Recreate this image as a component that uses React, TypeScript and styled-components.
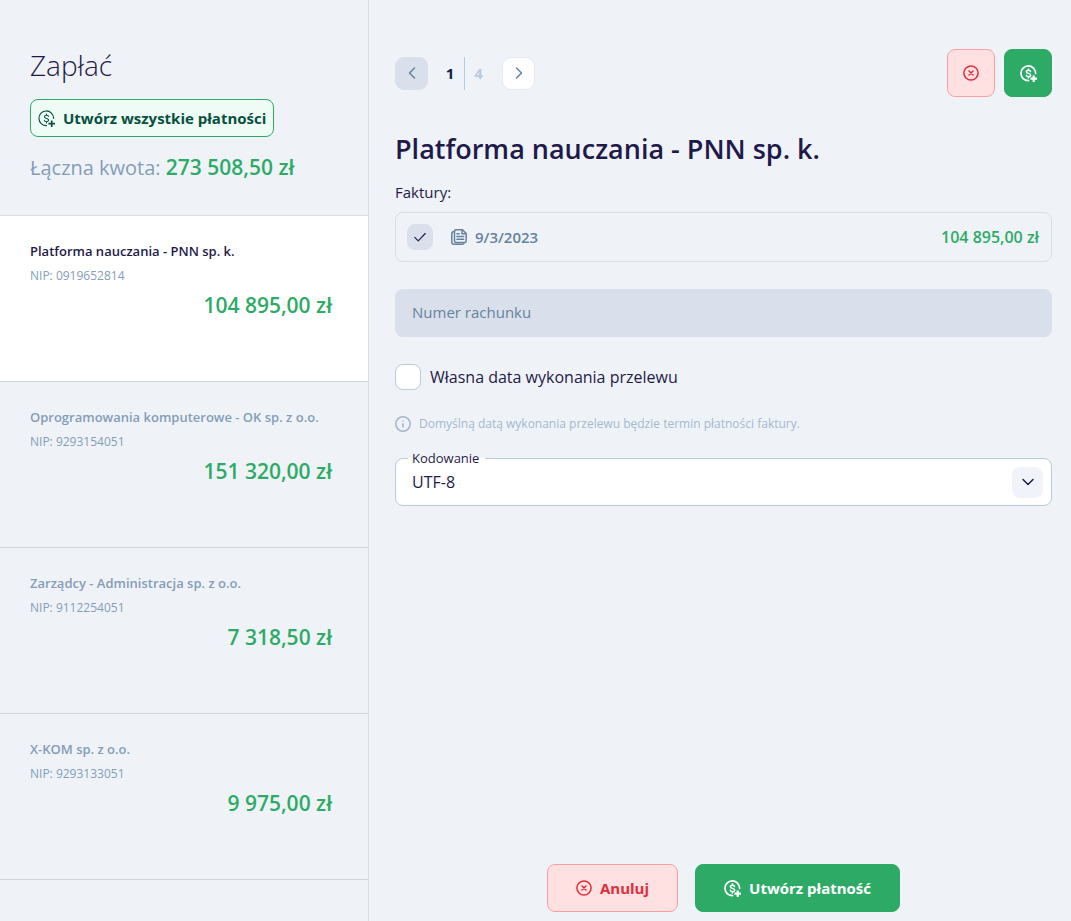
import React, { useState } from 'react';
import styled, { createGlobalStyle, css } from 'styled-components';

const color = {
  page: '#eff3f8',
  line: '#d9dfe6',
  field: '#d9e0eb',
  outline: '#b8cadd',
  ink: '#1f1a4a',
  slate: '#66829f',
  muted: '#849db7',
  faint: '#a3b8ce',
  green: '#2dab66',
  greenInk: '#07503f',
  red: '#e02d3c',
};

const GlobalStyle = createGlobalStyle`
  *, *::before, *::after { box-sizing: border-box; }
  body {
    margin: 0;
    background: ${color.page};
    color: ${color.ink};
    font-family: "Open Sans", "Noto Sans", sans-serif;
    font-size: 15px;
    line-height: 20px;
  }
  button, input, select { font: inherit; color: inherit; margin: 0; }
  button { cursor: pointer; padding: 0; }
  h1, h2, p, ul { margin: 0; padding: 0; }
`;

const Page = styled.div`
  display: flex;
  min-height: 100vh;
`;

const Sidebar = styled.aside`
  flex: none;
  width: 369px;
  border-right: 1px solid ${color.line};
`;

const Summary = styled.header`
  display: flex;
  flex-direction: column;
  align-items: flex-start;
  height: 216px;
  padding: 47px 30px 0;
  border-bottom: 1px solid ${color.line};
`;

const Title = styled.h1`
  font-size: 28px;
  line-height: 36px;
  font-weight: 300;
`;

const Total = styled.p`
  margin-top: 16px;
  font-size: 20px;
  line-height: 28px;
  color: ${color.muted};
  strong { font-size: 21px; font-weight: 600; color: ${color.green}; }
`;

const PayeeList = styled.ul`
  list-style: none;
`;

const Payee = styled.button<{ $active: boolean }>`
  display: flex;
  flex-direction: column;
  width: 100%;
  height: 166px;
  padding: 25px 36px 0 30px;
  border: 0;
  border-bottom: 1px solid #cdd5dd;
  text-align: left;
  background: ${(p) => (p.$active ? '#fff' : 'transparent')};
  color: ${(p) => (p.$active ? color.ink : color.muted)};
`;

const PayeeName = styled.span`
  font-size: 13px;
  font-weight: 600;
`;

const PayeeId = styled.span`
  margin-top: 6px;
  font-size: 12px;
  line-height: 18px;
  color: ${color.muted};
`;

const PayeeAmount = styled.span`
  align-self: flex-end;
  margin-top: 6px;
  font-size: 21px;
  line-height: 28px;
  font-weight: 600;
  color: ${color.green};
`;

const Main = styled.main`
  flex: 1;
  min-width: 0;
  display: flex;
  flex-direction: column;
  padding: 49px 19px 9px 26px;
`;

const Toolbar = styled.div`
  display: flex;
  align-items: center;
  justify-content: space-between;
`;

const Pager = styled.nav`
  display: flex;
  align-items: center;
`;

const PageButton = styled.button`
  display: grid;
  place-items: center;
  width: 33px;
  height: 33px;
  border: 1px solid #e3eaf2;
  border-radius: 9px;
  background: #fff;
  color: ${color.slate};
  &:disabled { background: ${color.field}; border-color: ${color.field}; cursor: default; }
`;

const PageNumber = styled.span<{ $total?: boolean }>`
  display: grid;
  place-items: center;
  width: 28px;
  height: 33px;
  font-weight: 700;
  color: ${(p) => (p.$total ? '#b8cadd' : '#0d2440')};
  ${(p) => p.$total && css`border-left: 1px solid ${color.outline};`}
`;

const PageNumbers = styled.div`
  display: flex;
  padding: 0 10px 0 8px;
`;

const Actions = styled.div`
  display: flex;
  gap: 9px;
`;

const tones = {
  cancel: css`background: #ffe1e2; border-color: #ff9fa1; color: ${color.red};`,
  confirm: css`background: ${color.green}; border-color: ${color.green}; color: #fff;`,
  soft: css`background: #effcf5; border-color: ${color.green}; color: ${color.greenInk};`,
};

const Button = styled.button<{ $tone: keyof typeof tones; $size?: 'square' | 'small' }>`
  display: flex;
  align-items: center;
  justify-content: center;
  gap: 8px;
  height: 48px;
  padding: 0 28px;
  border: 1px solid;
  border-radius: 8px;
  font-weight: 700;
  ${(p) => tones[p.$tone]}
  ${(p) => p.$size === 'square' && css`width: 48px; padding: 0;`}
  ${(p) => p.$size === 'small' && css`height: 38px; padding: 0 7px; margin-top: 16px;`}
`;

const Heading = styled.h2`
  margin-top: 34px;
  font-size: 27px;
  line-height: 36px;
  font-weight: 600;
`;

const Caption = styled.p`
  margin-top: 15px;
`;

const Invoice = styled.div`
  display: flex;
  align-items: center;
  height: 50px;
  margin-top: 10px;
  padding: 0 12px 0 11px;
  border: 1px solid ${color.line};
  border-radius: 8px;
  font-weight: 600;
`;

const InvoiceDate = styled.label`
  display: flex;
  align-items: center;
  gap: 8px;
  margin-left: 18px;
  color: ${color.slate};
`;

const InvoiceAmount = styled.span`
  margin-left: auto;
  font-size: 16px;
  color: ${color.green};
`;

const Tick = styled.span`
  display: grid;
  width: 26px;
  height: 26px;
  > * { grid-area: 1 / 1; }
  svg { place-self: center; pointer-events: none; visibility: hidden; }
  input:checked + svg { visibility: visible; }
`;

const TickInput = styled.input`
  appearance: none;
  width: 26px;
  height: 26px;
  border: 1px solid ${color.outline};
  border-radius: 8px;
  background: #fff;
  &:checked { background: ${color.field}; border-color: ${color.field}; }
`;

const AccountInput = styled.input`
  width: 100%;
  height: 48px;
  margin-top: 27px;
  padding: 0 17px 2px;
  border: 0;
  border-radius: 8px;
  background: ${color.field};
  &::placeholder { color: ${color.slate}; opacity: 1; }
`;

const CheckRow = styled.label`
  display: flex;
  align-items: center;
  align-self: flex-start;
  gap: 9px;
  margin-top: 27px;
  font-size: 16px;
`;

const Hint = styled.p`
  display: flex;
  align-items: center;
  gap: 8px;
  margin-top: 24px;
  font-size: 12px;
  color: ${color.faint};
`;

const SelectField = styled.div`
  position: relative;
  display: grid;
  margin-top: 24px;
  > select, > span { grid-area: 1 / 1; }
`;

const SelectLabel = styled.label`
  position: absolute;
  left: 13px;
  top: -10px;
  padding: 0 6px 0 4px;
  font-size: 13px;
  background: linear-gradient(${color.page} 10px, #fff 10px);
`;

const Select = styled.select`
  appearance: none;
  width: 100%;
  height: 48px;
  padding: 0 56px 0 16px;
  border: 1px solid ${color.outline};
  border-radius: 8px;
  background: #fff;
  font-size: 16px;
`;

const SelectArrow = styled.span`
  display: grid;
  place-items: center;
  place-self: center end;
  width: 31px;
  height: 31px;
  margin-right: 9px;
  border-radius: 8px;
  background: #f0f3f9;
  pointer-events: none;
`;

const Footer = styled.footer`
  display: flex;
  justify-content: center;
  gap: 17px;
  margin-top: auto;
  padding-top: 24px;
`;

const Icon = ({ children, size = 16, weight = 1.5 }: { children: React.ReactNode; size?: number; weight?: number }) => (
  <svg width={size} height={size} viewBox="0 0 16 16" fill="none" stroke="currentColor" strokeWidth={weight} strokeLinecap="round" strokeLinejoin="round" aria-hidden="true">
    {children}
  </svg>
);

const CoinPlusIcon = ({ light = false }: { light?: boolean }) => (
  <Icon size={17} weight={light ? 1.1 : 1.6}>
    <path d="M14.700 7.800A6.900 6.900 0 1 0 8 14.700" />
    <path d="M9.900 6.100C9.700 5.300 9 4.900 8 4.900c-1.200 0-2 .6-2 1.500C6 8.500 10 7.300 10 9.500c0 1-.9 1.500-2 1.500s-2-.5-2.100-1.400M8 3.700v1.200M8 11v1.200" strokeWidth={light ? 1 : 1.4} />
    <path d="M12.900 9.800v6.200M9.800 12.900h6.200" strokeWidth={light ? 1.600 : 2.100} strokeLinecap="butt" />
  </Icon>
);

const CancelIcon = () => (
  <Icon size={16} weight={1.5}>
    <circle cx="8" cy="8" r="7.100" />
    <path d="m6 6 4 4m0-4-4 4" />
  </Icon>
);

const InvoiceIcon = () => (
  <Icon size={16} weight={1.5}>
    <path d="M5 .8h6.500l3.700 3.700v7.500a1.500 1.500 0 0 1-1.500 1.500H5A1.500 1.500 0 0 1 3.500 12V2.300A1.500 1.500 0 0 1 5 .8Z" />
    <path d="M11 1v3.700h4M5.900 4.800h2.300M5.900 7.500h6.800M5.900 10.200h6.800" />
    <path d="M3.300 2.500C1.700 2.500.8 3.300.8 4.800v8.400c0 1.300.8 2 2 2h8.700c1 0 1.500-.6 1.700-1.500" />
  </Icon>
);

const InfoIcon = () => (
  <Icon size={16} weight={1.6}>
    <circle cx="8" cy="8" r="7.200" />
    <path d="M8 7.200v4.200" strokeLinecap="butt" />
    <path d="M8 5v.1" />
  </Icon>
);

const payees = [
  { name: 'Platforma nauczania - PNN sp. k.', nip: '0919652814', amount: '104 895,00 zł' },
  { name: 'Oprogramowania komputerowe - OK sp. z o.o.', nip: '9293154051', amount: '151 320,00 zł' },
  { name: 'Zarządcy - Administracja sp. z o.o.', nip: '9112254051', amount: '7 318,50 zł' },
  { name: 'X-KOM sp. z o.o.', nip: '9293133051', amount: '9 975,00 zł' },
];

export default function App() {
  const [current, setCurrent] = useState(0);
  const payee = payees[current];

  return (
    <Page>
      <GlobalStyle />
      <Sidebar>
        <Summary>
          <Title>Zapłać</Title>
          <Button $tone="soft" $size="small" type="button">
            <CoinPlusIcon light />
            Utwórz wszystkie płatności
          </Button>
          <Total>Łączna kwota: <strong>273 508,50 zł</strong></Total>
        </Summary>
        <PayeeList>
          {payees.map((item, i) => (
            <li key={item.name}>
              <Payee type="button" $active={i === current} onClick={() => setCurrent(i)}>
                <PayeeName>{item.name}</PayeeName>
                <PayeeId>NIP: {item.nip}</PayeeId>
                <PayeeAmount>{item.amount}</PayeeAmount>
              </Payee>
            </li>
          ))}
        </PayeeList>
      </Sidebar>

      <Main>
        <Toolbar>
          <Pager>
            <PageButton type="button" aria-label="Poprzednia" disabled={current === 0} onClick={() => setCurrent(current - 1)}>
              <Icon><path d="M10.500 3 5.500 8l5 5" /></Icon>
            </PageButton>
            <PageNumbers>
              <PageNumber>{current + 1}</PageNumber>
              <PageNumber $total>{payees.length}</PageNumber>
            </PageNumbers>
            <PageButton type="button" aria-label="Następna" disabled={current === payees.length - 1} onClick={() => setCurrent(current + 1)}>
              <Icon><path d="m5.500 3 5 5-5 5" /></Icon>
            </PageButton>
          </Pager>
          <Actions>
            <Button $tone="cancel" $size="square" type="button" aria-label="Anuluj"><CancelIcon /></Button>
            <Button $tone="confirm" $size="square" type="button" aria-label="Utwórz płatność"><CoinPlusIcon /></Button>
          </Actions>
        </Toolbar>

        <Heading>{payee.name}</Heading>
        <Caption>Faktury:</Caption>
        <Invoice>
          <Tick>
            <TickInput type="checkbox" id="invoice" defaultChecked />
            <Icon size={14} weight={1.3}><path d="m2 8.500 4 4L14 4" /></Icon>
          </Tick>
          <InvoiceDate htmlFor="invoice"><InvoiceIcon />9/3/2023</InvoiceDate>
          <InvoiceAmount>{payee.amount}</InvoiceAmount>
        </Invoice>

        <AccountInput type="text" placeholder="Numer rachunku" aria-label="Numer rachunku" />

        <CheckRow>
          <TickInput type="checkbox" />
          Własna data wykonania przelewu
        </CheckRow>

        <Hint><InfoIcon />Domyślną datą wykonania przelewu będzie termin płatności faktury.</Hint>

        <SelectField>
          <Select id="encoding" defaultValue="UTF-8">
            <option>UTF-8</option>
          </Select>
          <SelectArrow><Icon><path d="m3 5.500 5 5 5-5" /></Icon></SelectArrow>
          <SelectLabel htmlFor="encoding">Kodowanie</SelectLabel>
        </SelectField>

        <Footer>
          <Button $tone="cancel" type="button"><CancelIcon />Anuluj</Button>
          <Button $tone="confirm" type="button"><CoinPlusIcon />Utwórz płatność</Button>
        </Footer>
      </Main>
    </Page>
  );
}
